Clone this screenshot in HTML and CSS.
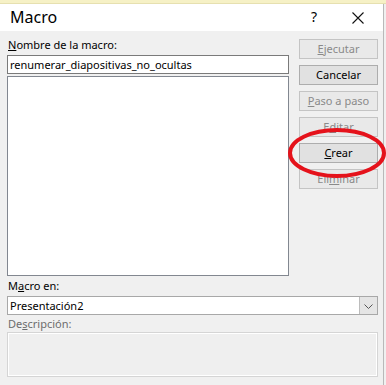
FILE: index.html
```html
<!DOCTYPE html>
<html lang="es">
<head>
    <meta charset="UTF-8">
    <title>Macro</title>
    <link rel="stylesheet" href="styles.css">
</head>
<body>
    <div class="backdrop"></div>
    <div class="dialog">
        <div class="titlebar">
            <span class="title">Macro</span>
            <span class="help">?</span>
            <svg class="close" width="12" height="12" viewBox="0 0 12 12">
                <path d="M0.5 0.5 L11.5 11.5 M11.5 0.5 L0.5 11.5" stroke="#111" stroke-width="1.1" fill="none"/>
            </svg>
        </div>
        <div class="content">
            <div class="top">
                <div class="left">
                    <div class="label"><u>N</u>ombre de la macro:</div>
                    <div class="input">renumerar_diapositivas_no_ocultas</div>
                    <div class="listbox"></div>
                </div>
                <div class="buttons">
                    <div class="btn disabled"><u>E</u>jecutar</div>
                    <div class="btn">Cancelar</div>
                    <div class="btn disabled"><u>P</u>aso a paso</div>
                    <div class="btn disabled">E<u>d</u>itar</div>
                    <div class="btn"><u>C</u>rear</div>
                    <div class="btn disabled">Eli<u>m</u>inar</div>
                    <svg class="circle" width="104" height="54" viewBox="0 0 104 54">
                        <ellipse cx="52" cy="27" rx="47" ry="23" fill="none" stroke="#e5121b" stroke-width="4"/>
                    </svg>
                </div>
            </div>
            <div class="label">M<u>a</u>cro en:</div>
            <div class="select">
                <span class="select-text">Presentación2</span>
                <span class="arrow">
                    <svg width="9" height="5" viewBox="0 0 9 5"><path d="M0.5 0.5 L4.5 4.5 L8.5 0.5" stroke="#555" fill="none"/></svg>
                </span>
            </div>
            <div class="label muted">De<u>s</u>cripción:</div>
            <div class="description"></div>
        </div>
    </div>
</body>
</html>
```

FILE: styles.css
```css
body {
    margin: 0;
    width: 386px;
    height: 385px;
    background: #f0f0f0;
    font-family: 'Noto Sans', sans-serif;
    font-size: 11px;
    color: #000;
    overflow: hidden;
}
.backdrop {
    height: 4px;
    background: #f6f1c6;
    border-bottom: 1px solid #e6e0b0;
    box-sizing: border-box;
}
.dialog {
    width: 384px;
    border-right: 1px solid #b9b9b9;
    box-sizing: border-box;
    height: 381px;
}
.titlebar {
    height: 27px;
    background: #ffffff;
    display: flex;
    align-items: center;
    padding-left: 10px;
}
.title {
    font-size: 16px;
    flex: 1;
    padding-bottom: 2px;
}
.help {
    font-size: 14px;
    margin-right: 35px;
    padding-bottom: 2px;
}
.close {
    margin-right: 19px;
}
.content {
    padding: 4px 5px 0 7px;
}
.top {
    display: flex;
    gap: 10px;
    position: relative;
}
.left {
    width: 282px;
}
.label {
    height: 20px;
    line-height: 20px;
    padding-left: 1px;
}
.label.muted {
    color: #6d6d6d;
    height: 17px;
    line-height: 17px;
}
.input {
    height: 19px;
    line-height: 17px;
    border: 1px solid #7a7a7a;
    background: #fff;
    box-sizing: border-box;
    padding-left: 2px;
}
.listbox {
    margin-top: 2px;
    height: 200px;
    border: 1px solid #828790;
    background: #fff;
    box-sizing: border-box;
}
.buttons {
    width: 79px;
    padding-top: 4px;
    display: flex;
    flex-direction: column;
    gap: 6px;
}
.btn {
    height: 20px;
    line-height: 18px;
    border: 1px solid #adadad;
    background: #e1e1e1;
    box-sizing: border-box;
    text-align: center;
}
.btn.disabled {
    border-color: #c4c4c4;
    background: #e9e9e9;
    color: #8a8a8a;
}
.circle {
    position: absolute;
    left: 278px;
    top: 91px;
}
.select {
    display: flex;
    height: 19px;
    border: 1px solid #a8a8a8;
    background: #fff;
    box-sizing: border-box;
}
.select-text {
    flex: 1;
    line-height: 17px;
    padding-left: 2px;
}
.arrow {
    width: 18px;
    background: #e5e5e5;
    border-left: 1px solid #bcbcbc;
    display: flex;
    align-items: center;
    justify-content: center;
    padding-top: 2px;
    box-sizing: border-box;
}
.description {
    height: 45px;
    border: 1px solid #d5d5d5;
    box-shadow: inset 0 0 0 1px #ffffff;
    background: #efefef;
    box-sizing: border-box;
}
```
